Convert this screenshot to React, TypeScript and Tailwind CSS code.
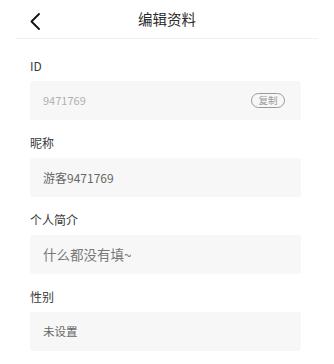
const FONT = { fontFamily: '"Noto Sans CJK SC", "Noto Sans", sans-serif' };

type Field = { label: string; value: string; valueClass: string; copy?: boolean };

const FIELDS: Field[] = [
  { label: 'ID', value: '9471769', valueClass: 'text-[11px] text-[#b0b0b0]', copy: true },
  { label: '昵称', value: '游客9471769', valueClass: 'text-[12px] text-[#666666]' },
  { label: '个人简介', value: '什么都没有填~', valueClass: 'text-[13.5px] text-[#777777]' },
  { label: '性别', value: '未设置', valueClass: 'text-[11.5px] text-[#666666]' },
];

export default function App() {
  return (
    <div className="w-[334px] h-[364px] bg-white overflow-hidden" style={FONT}>
      {/* Header */}
      <div className="relative h-[39px] mx-4 flex items-center justify-center border-b border-[#efefef]">
        <svg className="absolute left-[13px] top-[13px]" width="12" height="17" viewBox="0 0 12 17" fill="none">
          <polyline points="10,1 2.5,8.5 10,16" stroke="#111" strokeWidth="1.8" strokeLinecap="round" strokeLinejoin="round" />
        </svg>
        <h1 className="text-[14.5px] text-[#2a2a2a] leading-none">编辑资料</h1>
      </div>

      <div className="pl-[30px] pr-[33px] pt-[19px] flex flex-col">
        {FIELDS.map((f, i) => (
          <div key={f.label} className={i > 0 ? 'mt-[15px]' : ''}>
            <div className="h-[16px] flex items-center text-[12px] text-[#3a3a3a] leading-none">{f.label}</div>
            <div className="mt-[7px] h-[39px] rounded-[3px] bg-[#f7f7f7] flex items-center justify-between pl-[13px] pr-[16px]">
              <span className={`leading-none ${f.valueClass}`}>{f.value}</span>
              {f.copy && (
                <span className="h-[15px] w-[34px] rounded-full border border-[#9a9a9a] flex items-center justify-center text-[9.5px] text-[#999] leading-none">
                  复制
                </span>
              )}
            </div>
          </div>
        ))}
      </div>
    </div>
  );
}
